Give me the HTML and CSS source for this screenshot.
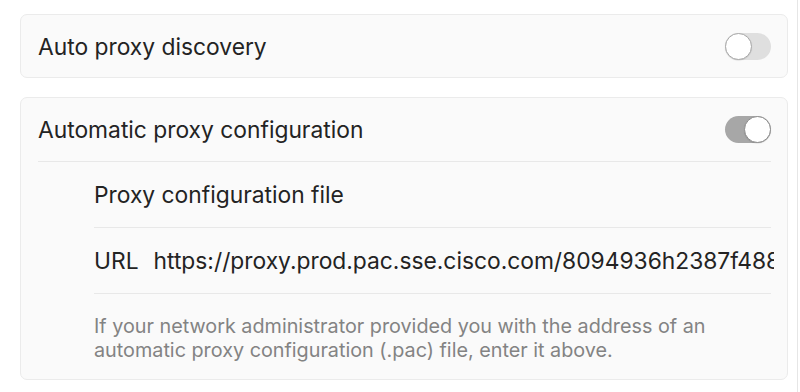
FILE: index.html
```html
<!DOCTYPE html>
<html lang="en">
<head>
<meta charset="utf-8">
<title>Proxies</title>
<link rel="stylesheet" href="styles.css">
</head>
<body>
<div class="pane">
  <section class="card">
    <div class="row">
      <span class="label">Auto proxy discovery</span>
      <span class="toggle"><span class="knob"></span></span>
    </div>
  </section>
  <section class="card">
    <div class="row head">
      <span class="label">Automatic proxy configuration</span>
      <span class="toggle on"><span class="knob"></span></span>
    </div>
    <div class="sub">
      <div class="subrow">Proxy configuration file</div>
      <div class="subrow url">
        <span class="lbl">URL</span>
        <span class="val">https://proxy.prod.pac.sse.cisco.com/8094936h2387f4888</span>
      </div>
      <p class="help">If your network administrator provided you with the address of an automatic proxy configuration (.pac) file, enter it above.</p>
    </div>
  </section>
</div>
</body>
</html>
```

FILE: styles.css
```css
html, body {
  margin: 0;
  padding: 0;
  background: #ffffff;
}

body {
  font-family: Inter, "Noto Sans", "Liberation Sans", sans-serif;
  color: #232323;
  -webkit-font-smoothing: antialiased;
}

.pane {
  box-sizing: border-box;
  width: 798px;
  height: 392px;
  padding: 14px 10px 0 20px;
  border-right: 1px solid #e6e6e6;
  display: flex;
  flex-direction: column;
  gap: 19px;
}

.card {
  width: 768px;
  box-sizing: border-box;
  background: #fafafa;
  border: 1px solid #ebebeb;
  border-radius: 7px;
  padding: 0 16px 0 17px;
}

.row {
  height: 62px;
  display: flex;
  align-items: center;
  justify-content: space-between;
  font-size: 22.8px;
}

.row.head {
  height: 63px;
  border-bottom: 1px solid #e8e8e8;
}

.toggle {
  position: relative;
  width: 46px;
  height: 27px;
  border-radius: 14px;
  background: #dfdfdf;
  flex: none;
}

.toggle.on {
  background: #a7a7a7;
}

.knob {
  position: absolute;
  top: 0;
  left: 0;
  width: 27px;
  height: 27px;
  box-sizing: border-box;
  border-radius: 50%;
  background: #ffffff;
  border: 1px solid #a9a9a9;
  box-shadow: 0 0.5px 1px rgba(0, 0, 0, 0.15);
}

.toggle.on .knob {
  left: 19px;
  border-color: #8e8e8e;
}

.sub {
  margin-left: 56px;
}

.subrow {
  height: 65px;
  display: flex;
  align-items: center;
  font-size: 22.8px;
  border-bottom: 1px solid #e8e8e8;
}

.subrow.url {
  gap: 15px;
}

.lbl {
  flex: none;
}

.val {
  flex: 1;
  min-width: 0;
  overflow: hidden;
  white-space: nowrap;
  margin-right: -3px;
}

.help {
  margin: 0;
  padding: 20px 0 17px;
  font-size: 19.8px;
  line-height: 24px;
  color: #838383;
  max-width: 660px;
}
```
